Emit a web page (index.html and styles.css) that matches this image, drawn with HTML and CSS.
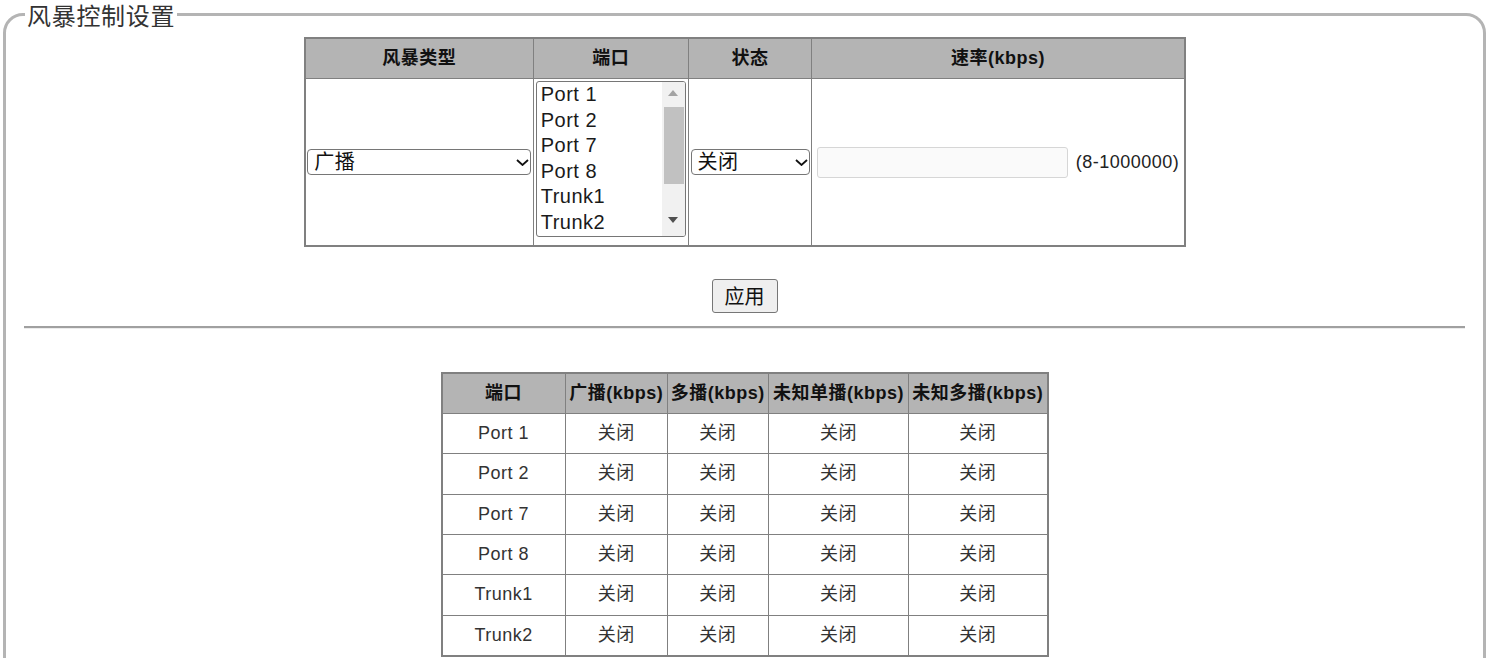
FILE: index.html
```html
<!DOCTYPE html>
<html lang="zh-CN">
<head>
<meta charset="utf-8">
<title>风暴控制设置</title>
<link rel="stylesheet" href="styles.css">
</head>
<body>
<fieldset class="panel">
  <legend class="panel-title">风暴控制设置</legend>

  <table class="grid cfg">
    <thead>
      <tr>
        <th class="c-type">风暴类型</th>
        <th class="c-port">端口</th>
        <th class="c-state">状态</th>
        <th class="c-rate">速率(kbps)</th>
      </tr>
    </thead>
    <tbody>
      <tr>
        <td>
          <div class="cell-row">
            <span class="dd-wrap">
              <select class="dd dd-type">
                <option>广播</option>
                <option>多播</option>
                <option>未知单播</option>
                <option>未知多播</option>
              </select>
              <svg class="chev" width="13" height="7" viewBox="0 0 13 7"><polyline points="1,1 6.5,6 12,1" fill="none" stroke="#111" stroke-width="1.8"/></svg>
            </span>
          </div>
        </td>
        <td class="lb-cell">
          <div class="listbox" role="listbox" aria-multiselectable="true">
            <div class="lb-opts">
              <div class="lb-opt" role="option">Port 1</div>
              <div class="lb-opt" role="option">Port 2</div>
              <div class="lb-opt" role="option">Port 7</div>
              <div class="lb-opt" role="option">Port 8</div>
              <div class="lb-opt" role="option">Trunk1</div>
              <div class="lb-opt" role="option">Trunk2</div>
            </div>
            <div class="sbar">
              <div class="sbtn"><svg width="10" height="6" viewBox="0 0 10 6"><polygon points="0,6 5,0 10,6" fill="#a3a3a3"/></svg></div>
              <div class="strack"><div class="sthumb"></div></div>
              <div class="sbtn"><svg width="10" height="6" viewBox="0 0 10 6"><polygon points="0,0 10,0 5,6" fill="#505050"/></svg></div>
            </div>
          </div>
        </td>
        <td>
          <div class="cell-row">
            <span class="dd-wrap">
              <select class="dd dd-state">
                <option>关闭</option>
                <option>开启</option>
              </select>
              <svg class="chev" width="13" height="7" viewBox="0 0 13 7"><polyline points="1,1 6.5,6 12,1" fill="none" stroke="#111" stroke-width="1.8"/></svg>
            </span>
          </div>
        </td>
        <td>
          <div class="cell-row">
            <input class="rate-input" type="text" disabled>
            <span class="hint">(8-1000000)</span>
          </div>
        </td>
      </tr>
    </tbody>
  </table>

  <div class="actions"><button class="btn" type="button">应用</button></div>

  <hr class="sep">

  <table class="grid summary">
    <thead>
      <tr>
        <th class="s1">端口</th>
        <th class="s2">广播(kbps)</th>
        <th class="s3">多播(kbps)</th>
        <th class="s4">未知单播(kbps)</th>
        <th class="s5">未知多播(kbps)</th>
      </tr>
    </thead>
    <tbody>
      <tr><td>Port 1</td><td>关闭</td><td>关闭</td><td>关闭</td><td>关闭</td></tr>
      <tr><td>Port 2</td><td>关闭</td><td>关闭</td><td>关闭</td><td>关闭</td></tr>
      <tr><td>Port 7</td><td>关闭</td><td>关闭</td><td>关闭</td><td>关闭</td></tr>
      <tr><td>Port 8</td><td>关闭</td><td>关闭</td><td>关闭</td><td>关闭</td></tr>
      <tr><td>Trunk1</td><td>关闭</td><td>关闭</td><td>关闭</td><td>关闭</td></tr>
      <tr><td>Trunk2</td><td>关闭</td><td>关闭</td><td>关闭</td><td>关闭</td></tr>
    </tbody>
  </table>
</fieldset>
</body>
</html>
```

FILE: styles.css
```css
* {
  box-sizing: border-box;
}

body {
  margin: 0;
  background: #ffffff;
  color: #222222;
  font-family: "Liberation Sans", "Noto Sans CJK SC", sans-serif;
}

.panel {
  margin: 0 3px;
  padding: 0 4px 40px;
  border: 3px solid #b4b4b4;
  border-radius: 20px;
  min-width: 0;
}

.panel-title {
  margin-left: 15px;
  padding: 0 2px;
  font-family: "Noto Sans CJK SC", sans-serif;
  font-size: 24px;
  line-height: 29px;
  letter-spacing: 0.7px;
  color: #333333;
}

/* tables */
.grid {
  border-collapse: separate;
  border-spacing: 0;
  border: 1px solid #808080;
  margin: 0 auto;
  table-layout: fixed;
}

.grid th,
.grid td {
  padding: 0;
  text-align: center;
  border-right: 1px solid #808080;
  border-bottom: 1px solid #808080;
}

.grid tr > :first-child {
  border-left: 1px solid #808080;
}

.grid thead th {
  border-top: 1px solid #808080;
  background: #b4b4b4;
  color: #111111;
  font-weight: bold;
  font-size: 18px;
  letter-spacing: 0.5px;
  line-height: 39px;
  white-space: nowrap;
}

.cfg {
  width: 882px;
  margin-top: 8px;
}

.c-type { width: 228px; }
.c-port { width: 154px; }
.c-state { width: 123px; }
.c-rate { width: 370px; }

.cfg td {
  vertical-align: middle;
}

.cell-row {
  display: flex;
  align-items: center;
  justify-content: center;
}

/* dropdowns */
.dd-wrap {
  position: relative;
  display: inline-flex;
}

.dd {
  -webkit-appearance: none;
  appearance: none;
  height: 26px;
  margin: 0;
  padding: 0 20px 0 6px;
  border: 1px solid #767676;
  border-radius: 4px;
  background: #ffffff;
  color: #111111;
  font-family: "Liberation Sans", "Noto Sans CJK SC", sans-serif;
  font-size: 20px;
  letter-spacing: 0.5px;
  line-height: 24px;
}

.dd-type { width: 224px; }
.dd-state { width: 119px; }

.chev {
  position: absolute;
  right: 2px;
  top: 50%;
  margin-top: -3px;
  pointer-events: none;
}

/* list box */
.lb-cell {
  padding: 2px 0 8px !important;
  vertical-align: top;
}

.listbox {
  display: flex;
  width: 150px;
  height: 156px;
  margin: 0 auto;
  border: 1px solid #767676;
  border-radius: 3px;
  background: #ffffff;
  overflow: hidden;
}

.lb-opts {
  flex: 1;
  padding-left: 4px;
  overflow: hidden;
  text-align: left;
}

.lb-opt {
  font-size: 20px;
  letter-spacing: 0.5px;
  line-height: 25.6px;
  color: #1a1a1a;
  white-space: nowrap;
}

.sbar {
  display: flex;
  flex-direction: column;
  width: 23px;
  padding-bottom: 5px;
  background: #f1f1f1;
}

.sbtn {
  display: flex;
  align-items: center;
  justify-content: center;
  height: 22px;
  flex: none;
}

.strack {
  flex: 1;
  padding: 3px 1px 0 2px;
}

.sthumb {
  height: 77px;
  background: #c1c1c1;
}

/* rate input */
.rate-input {
  width: 251px;
  height: 31px;
  margin: 0 8px 0 0;
  padding: 0 4px;
  border: 1px solid #d6d6d6;
  border-radius: 3px;
  background: #fafafa;
  font-size: 18px;
}

.hint {
  font-size: 18px;
  letter-spacing: 0.5px;
  color: #222222;
  white-space: nowrap;
}

/* apply */
.actions {
  display: flex;
  justify-content: center;
  padding-top: 32px;
}

.btn {
  height: 34px;
  padding: 0 12px;
  border: 1px solid #767676;
  border-radius: 3px;
  background: #efefef;
  color: #111111;
  font-family: "Noto Sans CJK SC", sans-serif;
  font-size: 20px;
  line-height: 24px;
}

.sep {
  height: 0;
  margin: 13px 14px 0;
  border: 0;
  border-top: 2px solid #a0a0a0;
  border-bottom: 1px solid #ececec;
}

/* summary */
.summary {
  width: 608px;
  margin-top: 43px;
}

.s1 { width: 123px; }
.s2 { width: 101px; }
.s3 { width: 100px; }
.s4 { width: 139px; }
.s5 { width: 137px; }

.summary td {
  font-size: 18px;
  letter-spacing: 0.5px;
  line-height: 39.33px;
  color: #333333;
  white-space: nowrap;
}
```
